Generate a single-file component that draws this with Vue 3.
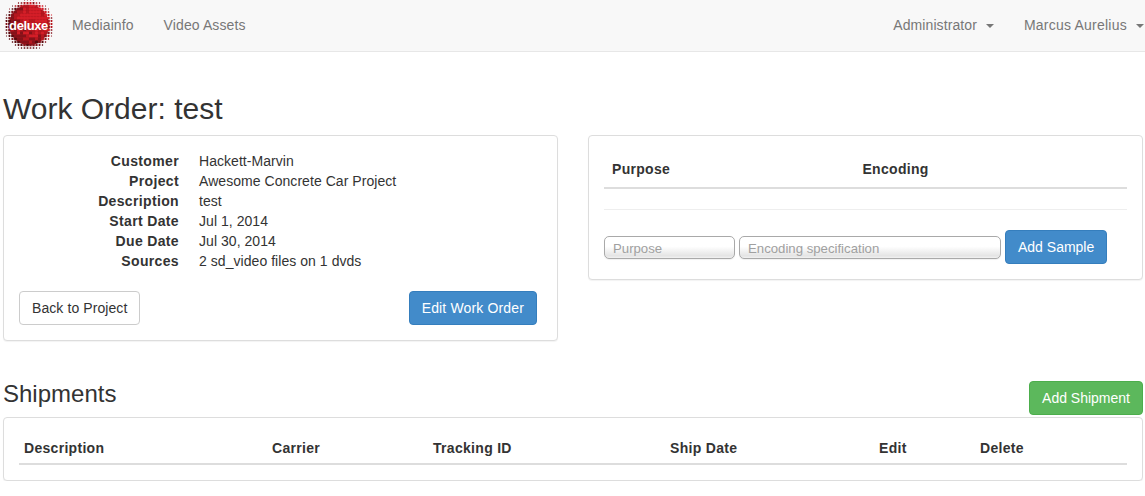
<template>
  <div class="page">
    <nav class="navbar">
      <div class="nav-left">
        <a class="brand">
          <svg class="logo" width="52" height="52" viewBox="0 0 52 52">
            <circle cx="26" cy="25" r="20" fill="#a8141d" />
            <rect v-for="d in logoDots" :key="d.k" :x="d.x - d.r" :y="d.y - d.r" :width="d.r * 2" :height="d.r * 2" :fill="d.c" :rx="d.r * 0.5" />
            <text x="25.5" y="29.5" text-anchor="middle" class="logo-text">deluxe</text>
          </svg>
        </a>
        <a class="nav-link">Mediainfo</a>
        <a class="nav-link">Video Assets</a>
      </div>
      <div class="nav-right">
        <a class="nav-link">Administrator <b class="caret"></b></a>
        <a class="nav-link nav-user">Marcus Aurelius <b class="caret"></b></a>
      </div>
    </nav>

    <main class="content">
      <h1>Work Order: test</h1>

      <div class="columns">
        <section class="panel info-panel">
          <dl>
            <template v-for="row in details" :key="row.label">
              <dt>{{ row.label }}</dt>
              <dd>{{ row.value }}</dd>
            </template>
          </dl>
          <div class="actions">
            <button class="btn btn-default">Back to Project</button>
            <button class="btn btn-primary btn-edit">Edit Work Order</button>
          </div>
        </section>

        <section class="panel sample-panel">
          <table class="table table-samples">
            <thead>
              <tr>
                <th v-for="c in sampleCols" :key="c.name" :style="{ width: c.w + 'px' }">{{ c.name }}</th>
              </tr>
            </thead>
            <tbody>
              <tr><td colspan="2"></td></tr>
            </tbody>
          </table>
          <form class="sample-form" @submit.prevent>
            <input class="field field-purpose" placeholder="Purpose" />
            <input class="field field-encoding" placeholder="Encoding specification" />
            <button class="btn btn-primary">Add Sample</button>
          </form>
        </section>
      </div>

      <div class="shipments-head">
        <h2>Shipments</h2>
        <button class="btn btn-success">Add Shipment</button>
      </div>
      <section class="panel shipments-panel">
        <table class="table table-shipments">
          <thead>
            <tr>
              <th v-for="c in shipmentCols" :key="c.name" :style="{ width: c.w + 'px' }">{{ c.name }}</th>
            </tr>
          </thead>
        </table>
      </section>
    </main>
  </div>
</template>

<script setup>
const details = [
  { label: 'Customer', value: 'Hackett-Marvin' },
  { label: 'Project', value: 'Awesome Concrete Car Project' },
  { label: 'Description', value: 'test' },
  { label: 'Start Date', value: 'Jul 1, 2014' },
  { label: 'Due Date', value: 'Jul 30, 2014' },
  { label: 'Sources', value: '2 sd_video files on 1 dvds' },
]

const sampleCols = [
  { name: 'Purpose', w: 250 },
  { name: 'Encoding', w: 272 },
]

const shipmentCols = [
  { name: 'Description', w: 248 },
  { name: 'Carrier', w: 161 },
  { name: 'Tracking ID', w: 237 },
  { name: 'Ship Date', w: 209 },
  { name: 'Edit', w: 101 },
  { name: 'Delete', w: 152 },
]

// halftone logo: dots shrink towards the rim, mottled with dark red
const logoDots = []
const step = 3
for (let iy = 0; iy < 18; iy++) {
  for (let ix = 0; ix < 18; ix++) {
    const x = 0.5 + ix * step
    const y = 0 + iy * step
    const dist = Math.hypot(x - 26, y - 25)
    if (dist > 25.5) continue
    const noise = Math.sin(ix * 12.9 + iy * 78.2) * 43758.5
    const n = noise - Math.floor(noise)
    // lighter towards the upper right, darker at lower left and the rim
    const shade = (x - 26) * 0.012 - (y - 25) * 0.012 + n * 0.55 - Math.max(0, dist - 13) * 0.05
    let c = '#d41e28'
    if (shade < -0.3) c = '#5a0a0f'
    else if (shade < 0) c = '#85121a'
    else if (shade < 0.25) c = '#b5171f'
    const r = dist > 19 ? Math.max(0.5, 1.5 - (dist - 19) * 0.16) : 1.5
    logoDots.push({ k: ix + '-' + iy, x, y, r, c })
  }
}
</script>

<style scoped>
.page {
  font-family: "Liberation Sans", Arial, sans-serif;
  font-size: 14px;
  line-height: 20px;
  color: #333;
}

.navbar {
  display: flex;
  justify-content: space-between;
  height: 51px;
  background: #f8f8f8;
  border-bottom: 1px solid #e7e7e7;
  overflow: hidden;
}

.nav-left,
.nav-right {
  display: flex;
  align-items: center;
  padding-bottom: 1px;
}

.brand {
  display: block;
  width: 52px;
  height: 51px;
  margin: 0 2px 0 3px;
}

.logo {
  display: block;
}

.logo-text {
  font-family: "Liberation Sans", Arial, sans-serif;
  font-size: 13px;
  font-weight: 700;
  fill: #fff;
  letter-spacing: -0.4px;
}

.nav-link {
  padding: 0 15px;
  color: #777;
  white-space: nowrap;
  letter-spacing: 0.1px;
}

.nav-right .nav-link {
  padding: 0 0 0 30px;
}

.nav-right .nav-user {
  letter-spacing: 0.22px;
}

.nav-right {
  padding-right: 1px;
}

.caret {
  display: inline-block;
  width: 0;
  height: 0;
  margin-left: 5px;
  vertical-align: middle;
  border-top: 4px solid #777;
  border-left: 4px solid transparent;
  border-right: 4px solid transparent;
}

.content {
  padding: 0 2px 0 3px;
}

h1 {
  margin: 37px 0 6px;
  font-size: 30px;
  font-weight: 500;
  line-height: 40px;
}

h2 {
  margin: 0;
  font-size: 24px;
  font-weight: 500;
  line-height: 26px;
}

.columns {
  display: flex;
  justify-content: space-between;
  align-items: flex-start;
}

.panel {
  background: #fff;
  border: 1px solid #ddd;
  border-radius: 4px;
  box-shadow: 0 1px 1px rgba(0, 0, 0, 0.05);
  padding: 15px;
}

.info-panel,
.sample-panel {
  width: 555px;
  box-sizing: border-box;
}

dl {
  display: grid;
  grid-template-columns: 160px 1fr;
  column-gap: 20px;
  margin: 0 0 20px;
}

dt {
  font-weight: 700;
  text-align: right;
  letter-spacing: 0.35px;
}

dd {
  margin: 0;
  letter-spacing: 0.05px;
}

.actions {
  display: flex;
  justify-content: space-between;
  padding-right: 4px;
}

.btn {
  height: 34px;
  padding: 6px 12px;
  font: inherit;
  border: 1px solid transparent;
  border-radius: 4px;
  white-space: nowrap;
  box-sizing: border-box;
}

.btn-default {
  background: #fff;
  border-color: #ccc;
  color: #333;
  letter-spacing: 0.08px;
}

.btn-edit {
  letter-spacing: 0.15px;
  margin-right: 1px;
}

.btn-primary {
  background: #428bca;
  border-color: #357ebd;
  color: #fff;
}

.btn-success {
  background: #5cb85c;
  border-color: #4cae4c;
  color: #fff;
}

.table {
  width: 100%;
  border-collapse: collapse;
  table-layout: fixed;
}

th {
  font-weight: 700;
  text-align: left;
  border-bottom: 2px solid #ddd;
  box-sizing: border-box;
  letter-spacing: 0.3px;
}

.table-samples th {
  padding: 8px;
}

.table-samples td {
  height: 20px;
  padding: 0;
  border-bottom: 1px solid #eee;
}

.table-shipments th {
  padding: 5px;
}

.sample-form {
  display: flex;
  align-items: center;
  gap: 4px;
  margin-top: 20px;
}

.field {
  height: 23px;
  padding: 2px 8px 0;
  box-sizing: border-box;
  font-family: "Liberation Sans", Arial, sans-serif;
  font-size: 13.2px;
  border: 1px solid #a9a9a9;
  border-radius: 5px;
  background: linear-gradient(#fff 45%, #e4e4e4 90%, #f2f2f2);
  box-shadow: 0 1px 1px rgba(0, 0, 0, 0.06);
  outline: none;
}

.field::placeholder {
  color: #a0a0a0;
  opacity: 1;
}

.field-purpose {
  width: 131px;
}

.field-encoding {
  width: 262px;
}

.shipments-head {
  display: flex;
  justify-content: space-between;
  align-items: flex-end;
  margin-top: 40px;
  margin-bottom: 2px;
}

.shipments-head h2 {
  margin-bottom: 8px;
}
</style>

<style>
html,
body {
  background: #fff;
}
</style>
